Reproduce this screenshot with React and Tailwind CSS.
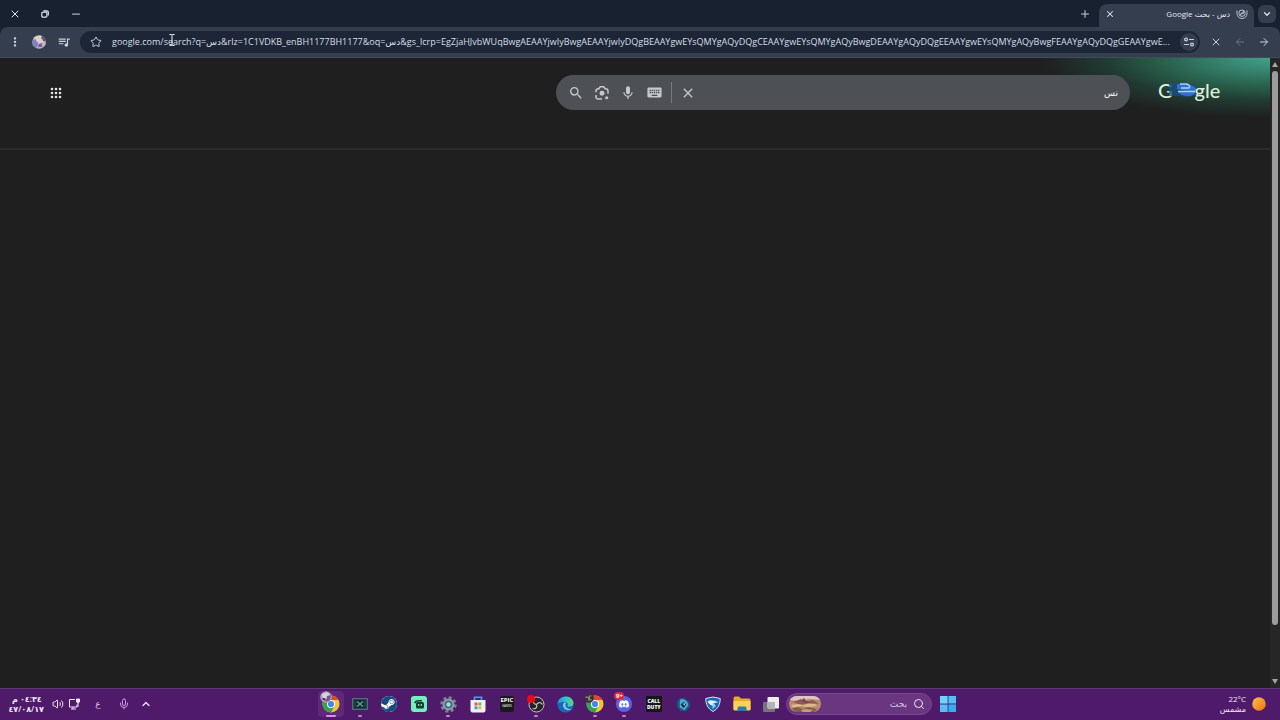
import {
  Search,
  X,
  Plus,
  Minus,
  Star,
  ChevronDown,
  ChevronUp,
  ArrowLeft,
  ArrowRight,
  Mic,
  Volume2,
} from "lucide-react";
import {
  MdMoreVert,
  MdQueueMusic,
  MdMic,
  MdKeyboard,
  MdSearch,
  MdClose,
} from "react-icons/md";
import { SiDiscord, SiSteam } from "react-icons/si";

const PAGE_URL =
  "google.com/search?q=دس&rlz=1C1VDKB_enBH1177BH1177&oq=دس&gs_lcrp=EgZjaHJvbWUqBwgAEAAYjwIyBwgAEAAYjwIyDQgBEAAYgwEYsQMYgAQyDQgCEAAYgwEYsQMYgAQyBwgDEAAYgAQyDQgEEAAYgwEYsQMYgAQyBwgFEAAYgAQyDQgGEAAYgwE...";

/* ---------- icons ---------- */

function RestoreIcon() {
  return (
    <svg viewBox="0 0 10 10" className="h-2 w-2" fill="none" stroke="currentColor" strokeWidth="1.5">
      <rect x="1" y="2.6" width="6.4" height="6.4" rx="1.4" />
      <path d="M3 1h4.4A1.7 1.7 0 0 1 9.1 2.7V7" />
    </svg>
  );
}

function TuneIcon() {
  return (
    <svg viewBox="0 0 12 12" className="h-3 w-3" fill="none" stroke="currentColor" strokeWidth="1.2">
      <circle cx="3" cy="3.5" r="1.4" />
      <path d="M6 3.5h5M1 8.5h5" />
      <circle cx="9" cy="8.5" r="1.4" />
    </svg>
  );
}

function TabIcon() {
  return (
    <svg viewBox="0 0 12 12" className="h-3 w-3" fill="none" stroke="#b9c1cd">
      <path d="M1 2.5v3a5 5 0 0 0 10 0v-3" strokeWidth="1" />
      <circle cx="6" cy="5.2" r="3.2" strokeWidth="1" />
      <path d="M4 7 8 3.4M6 5.2h2" strokeWidth="1.1" />
    </svg>
  );
}

function AppsIcon() {
  return (
    <svg viewBox="0 0 12 12" className="h-3 w-3" fill="currentColor">
      {[2, 6, 10].map((y) => [2, 6, 10].map((x) => <circle key={`${x}-${y}`} cx={x} cy={y} r="1.3" />))}
    </svg>
  );
}

function LensIcon() {
  return (
    <svg viewBox="0 0 24 24" className="h-4 w-4" fill="none" stroke="currentColor" strokeWidth="2.2">
      <path d="M3 11V9a3.500 3.500 0 0 1 3.500-3.500H8M16 5.500h1.500A3.500 3.500 0 0 1 21 9v4M3 15v2.500A3.500 3.500 0 0 0 6.500 21H12" />
      <path d="M7 5.500 9.500 2.500h5L17 5.500" />
      <circle cx="12" cy="12.500" r="3.700" fill="currentColor" stroke="none" />
      <circle cx="19" cy="19" r="2.300" fill="currentColor" stroke="none" />
    </svg>
  );
}

function TextCursor() {
  return (
    <svg viewBox="0 0 6 12" className="pointer-events-none absolute top-0 left-[57px] h-3 w-1.5" fill="none" stroke="#f2f2f2">
      <path d="M.5.500h2l.5.500.500-.500h2M3 1v10M.5 11.500h2l.500-.500.500.500h2" />
    </svg>
  );
}

function ProfileIcon() {
  return (
    <svg viewBox="0 0 14 14" className="h-3.5 w-3.5">
      <defs>
        <clipPath id="profile">
          <circle cx="7" cy="7" r="6.8" />
        </clipPath>
      </defs>
      <g clipPath="url(#profile)">
        <rect width="14" height="14" fill="#b6b0c6" />
        <path d="M0 6 5 3l2 5-3 6H0z" fill="#8080c0" />
        <path d="M2 2 9 0l1 4-5 3z" fill="#e2d2bd" />
        <path d="M9 2 14 0v6l-3 0z" fill="#5d5668" />
        <path d="m5 6 5-2 2 4-4 3z" fill="#d9cbd8" />
        <path d="m7 9 3-1 0 4H6z" fill="#76609a" />
        <path d="m10 7 4 0v5l-3-1z" fill="#c9b4b4" />
      </g>
    </svg>
  );
}

function ChromeIcon() {
  return (
    <svg viewBox="0 0 18 18" className="h-[18px] w-[18px]">
      <circle cx="9" cy="9" r="8.5" fill="#f4c531" />
      <path d="M9 9 1.640 4.750A8.500 8.500 0 0 0 9 17.500L12.500 11z" fill="#31a554" />
      <path d="M1.640 4.750A8.500 8.500 0 0 1 16.360 4.750L9 5.200 5.700 11z" fill="#e34335" />
      <circle cx="9" cy="9" r="4" fill="#fff" />
      <circle cx="9" cy="9" r="3.100" fill="#4285f4" />
    </svg>
  );
}

function ChromeProfileIcon() {
  return (
    <div className="relative">
      <ChromeIcon />
      <svg viewBox="0 0 12 12" className="absolute -top-1 -left-0.5 h-3 w-3">
        <circle cx="6" cy="6" r="5.800" fill="#a9a0bd" />
        <path d="M2 3 7 1l3 3-3 3-4 3z" fill="#ded0da" />
        <path d="m7 5 4-1-1 5-4 2z" fill="#675c8a" />
        <path d="M2 7h3l1 3-3-1z" fill="#44405c" />
      </svg>
    </div>
  );
}

function ChromeGameIcon() {
  return (
    <div className="relative">
      <ChromeIcon />
      <svg viewBox="0 0 10 10" className="absolute -top-0.5 -left-0.5 h-2.5 w-2.5">
        <circle cx="5" cy="5" r="4.800" fill="#34333a" />
        <path d="M1.500 3.500h2.500v1.500H1.500zM5 2.500h2.500v1H6v2.500h1.500v1.500H4V5z" fill="#8a857c" />
      </svg>
    </div>
  );
}

function TerminalIcon() {
  return (
    <svg viewBox="0 0 16 12" className="h-3 w-4">
      <rect x=".7" y=".7" width="14.600" height="10.600" fill="#132c35" stroke="#58757c" strokeWidth="1.200" />
      <path d="m5 3.500 6 5M11 3.500l-6 5" stroke="#54a985" strokeWidth="1.300" />
      <path d="M3 3v6M13 3v6" stroke="#315561" strokeWidth=".8" />
    </svg>
  );
}

function SteamIcon() {
  return (
    <div className="flex h-4 w-4 items-center justify-center rounded-full bg-white">
      <SiSteam className="h-4 w-4 text-[#164a80]" />
    </div>
  );
}

function GreenAppIcon() {
  return (
    <svg viewBox="0 0 16 16" className="h-4 w-4">
      <rect width="16" height="16" rx="3" fill="#73efbd" />
      <path d="M3 6.500Q4 4 7 4h4v1.500H7Q5.500 5.500 4.500 7.500z" fill="#183d37" />
      <rect x="5" y="6" width="8" height="6.500" rx="1.500" fill="#183d37" />
      <path d="M7.700 8v2M10.300 8v2" stroke="#73efbd" strokeWidth="1.200" />
    </svg>
  );
}

function SettingsIcon() {
  return (
    <svg viewBox="0 0 18 18" className="h-[17px] w-[17px]">
      <circle cx="9" cy="9" r="7" fill="none" stroke="#78858e" strokeWidth="3.400" strokeDasharray="3.100 2.400" />
      <circle cx="9" cy="9" r="6.300" fill="#8b989f" />
      <circle cx="9" cy="9" r="4" fill="#386a86" />
      <circle cx="9" cy="9" r="2.300" fill="#a9d6e0" />
    </svg>
  );
}

function StoreIcon() {
  return (
    <svg viewBox="0 0 16 17" className="h-[17px] w-4">
      <path d="M4.500 4V1.200h7V4" fill="none" stroke="#43a4e8" strokeWidth="1.600" />
      <path d="M.5 4h15v10.500a2 2 0 0 1-2 2h-11a2 2 0 0 1-2-2z" fill="#eef1fa" />
      <path fill="#e45b42" d="M4.500 6.500h3v3h-3z" />
      <path fill="#7bb548" d="M8.300 6.500h3v3h-3z" />
      <path fill="#3f9ddd" d="M4.500 10.300h3v3h-3z" />
      <path fill="#edb83d" d="M8.300 10.300h3v3h-3z" />
    </svg>
  );
}

function EpicIcon() {
  return (
    <div className="flex h-4 w-3.5 flex-col items-center rounded-xs bg-[#191919] pt-px text-white">
      <span className="text-[6px] leading-[7px] font-bold">EPIC</span>
      <span className="text-[3px] leading-[4px]">GAMES</span>
    </div>
  );
}

function ObsIcon() {
  return (
    <svg viewBox="0 0 18 18" className="h-[18px] w-[18px]">
      <circle cx="9.500" cy="9.500" r="7.500" fill="#252328" stroke="#c8c3c8" strokeWidth="1" />
      <path d="M9.500 9.500C6 9 5.500 6 7.500 4M9.500 9.500c2-3 5-2 6 0M9.500 9.500c1 3-1 5-4 4" fill="none" stroke="#bab6bb" strokeWidth="1.300" />
      <circle cx="4" cy="4" r="3.900" fill="#ef0814" />
    </svg>
  );
}

function EdgeIcon() {
  return (
    <svg viewBox="0 0 18 18" className="h-[17px] w-[17px]">
      <defs>
        <linearGradient id="edge" x1="0" x2="1">
          <stop stopColor="#278fd5" />
          <stop offset=".5" stopColor="#2ec4d6" />
          <stop offset="1" stopColor="#62d36c" />
        </linearGradient>
      </defs>
      <circle cx="9" cy="9" r="8.500" fill="#1469b8" />
      <path d="M.6 8.500C1 3.500 4.500.5 9.500.5c5 0 8 3.700 8 7 0 3-3 4.500-6.500 3.500 1.200-2.500 0-5-3.500-5C4 6 1.500 7.500.6 8.500z" fill="url(#edge)" />
      <path d="M7.500 7c-3 3 0 8 4 8 2 0 3.500-.5 4.500-1.500-3 .8-7-.6-7-3.500 0-1.200.5-1.800 1-2.200-.6-.8-1.600-1.200-2.500-.8z" fill="#bde9f5" opacity=".7" />
    </svg>
  );
}

function DiscordIcon() {
  return (
    <div className="relative flex h-4 w-4 items-center justify-center rounded-full bg-[#5865e8]">
      <SiDiscord className="h-2.5 w-2.5 text-white" />
      <span className="absolute -top-1 -left-0.5 flex h-2 w-2.5 items-center justify-center rounded-full bg-[#d92b3e] text-[6px] font-bold text-white">
        9+
      </span>
    </div>
  );
}

function CodIcon() {
  return (
    <div className="flex h-4 w-4 flex-col items-center justify-center bg-[#151719] text-[5px] leading-[6px] font-extrabold text-white">
      <span>CALL</span>
      <span>DUTY</span>
    </div>
  );
}

function BlueFaceIcon() {
  return (
    <svg viewBox="0 0 16 16" className="h-[15px] w-[15px]">
      <path d="M4 1h5l5 4 1 5-4 5H5L1 10V5z" fill="#135b82" />
      <path d="M5 2c5 0 8 3 8 7l-4 5-5-3 0-6z" fill="#4aafd6" />
      <path d="M8 5 5 8l3 4 3-4z" fill="#0b2d4b" />
      <path d="m7 7 3 0-1 2z" fill="#c9edf7" />
    </svg>
  );
}

function ShieldIcon() {
  return (
    <svg viewBox="0 0 16 16" className="h-4 w-4">
      <path d="M.8 2.500Q8-.500 15.200 2.500c0 6-2 10-7.200 13-5.200-3-7.200-7-7.200-13z" fill="#1768b5" stroke="#d3e9f8" strokeWidth="1" />
      <path d="M3 4.500h7l4 2-5 .5 2 3.500-4 2.500 1-4z" fill="#8dc5ec" />
      <path d="M2.500 6c2-2 6-2 9 1l-4 0 1 3-3-1z" fill="#e5f4fc" />
    </svg>
  );
}

function FolderIcon() {
  return (
    <svg viewBox="0 0 18 16" className="h-4 w-[18px]">
      <path d="M.5 2q0-1.500 1.500-1.500h4l2 2h8q1.500 0 1.500 1.500v10H.5z" fill="#e8a924" />
      <path d="M.5 5h17v8q0 1.500-1.500 1.500H2Q.5 14.500.5 13z" fill="#fbd15b" />
      <path d="M4.500 15v-3q0-1.500 1.500-1.500h6q1.500 0 1.500 1.500v3z" fill="#247fae" />
    </svg>
  );
}

function TaskViewIcon() {
  return (
    <svg viewBox="0 0 16 15" className="h-[15px] w-4">
      <rect y="5" width="12" height="10" rx="1" fill="#77737a" />
      <rect x="4.500" width="11.500" height="11.500" rx="1" fill="#ededed" />
      <path d="M4.500 5H12v6.500H5.500l-1-1z" fill="#b5b1b7" />
    </svg>
  );
}

function WindowsIcon() {
  return (
    <svg viewBox="0 0 16 16" className="h-4 w-4">
      <path fill="#6ed2fa" d="M0 0h7.600v7.600H0z" />
      <path fill="#53c1f5" d="M8.400 0H16v7.600H8.400zM0 8.400h7.600V16H0z" />
      <path fill="#35aeed" d="M8.400 8.400H16V16H8.400z" />
    </svg>
  );
}

function SearchArtIcon() {
  return (
    <svg viewBox="0 0 32 16" className="h-4 w-8">
      <defs>
        <clipPath id="art">
          <rect width="32" height="16" rx="8" />
        </clipPath>
      </defs>
      <g clipPath="url(#art)">
        <rect width="32" height="16" fill="#b98a70" />
        <path d="M0 0h32v4L20 3 9 5 0 4z" fill="#e0c3c4" />
        <path d="m4 6 8-3 5 3 7-2 6 4-10-1-8 2z" fill="#8f5c4f" />
        <path d="m2 9 7-1 5 1 5-1 7 0 2 2-9 1-6-1-9 2z" fill="#e2b98e" />
        <path d="m3 12 6-1 5 2 5-2 9 2-3 3H6z" fill="#83604c" />
        <path d="m12 14 5-1 7 1-3 2h-7z" fill="#c79c78" />
        <path d="m12 5 3-3 2 3 5 1-5 1z" fill="#704460" />
      </g>
    </svg>
  );
}

function NetworkIcon() {
  return (
    <svg viewBox="0 0 12 12" className="h-3 w-3" fill="none" stroke="currentColor" strokeWidth="1">
      <path d="M7 1.500H1.500v7.500h7.500V6.500M3 11h5M5 9v2" />
      <path d="M8.500 1h3v3l-1.500 1-1.500-1zM10 5v4" fill="currentColor" />
    </svg>
  );
}

/* ---------- taskbar data ---------- */

const apps = [
  { name: "Chrome", icon: ChromeProfileIcon, active: true, running: true },
  { name: "Terminal", icon: TerminalIcon, running: true },
  { name: "Steam", icon: SteamIcon },
  { name: "Clips", icon: GreenAppIcon },
  { name: "Settings", icon: SettingsIcon, running: true },
  { name: "Store", icon: StoreIcon },
  { name: "Epic Games", icon: EpicIcon },
  { name: "OBS", icon: ObsIcon, running: true },
  { name: "Edge", icon: EdgeIcon },
  { name: "Chrome games", icon: ChromeGameIcon, running: true },
  { name: "Discord", icon: DiscordIcon, running: true },
  { name: "Call of Duty", icon: CodIcon },
  { name: "Launcher", icon: BlueFaceIcon },
  { name: "Rocket League", icon: ShieldIcon },
  { name: "Files", icon: FolderIcon },
  { name: "Task view", icon: TaskViewIcon },
];

/* ---------- browser ---------- */

function TabStrip() {
  return (
    <div className="flex h-[27px] items-end justify-between bg-[#172130]">
      <div className="flex h-full items-center text-[#e3e6ea]">
        <button aria-label="Close window" className="flex w-[30px] justify-center">
          <X className="h-3 w-3" strokeWidth={2} />
        </button>
        <button aria-label="Restore window" className="flex w-[30px] justify-center">
          <RestoreIcon />
        </button>
        <button aria-label="Minimize window" className="flex w-8 justify-center text-[#a5adb8]">
          <Minus className="h-3 w-3" strokeWidth={2.5} />
        </button>
      </div>
      <div className="flex h-full items-end">
        <button aria-label="New tab" className="flex h-full w-7 items-center justify-center text-[#c7ced8]">
          <Plus className="h-3 w-3" strokeWidth={2} />
        </button>
        <div className="flex h-[23px] w-[155px] items-center rounded-t-lg bg-[#343e4f] pr-1.5 pb-1 pl-1.5">
          <button aria-label="Close tab" className="text-[#e3e6ea]">
            <X className="h-2.5 w-2.5" strokeWidth={2.5} />
          </button>
          <span dir="rtl" className="mr-1.5 ml-auto text-[8px] whitespace-nowrap text-[#e5e8ec]">
            دس - بحث Google
          </span>
          <TabIcon />
        </div>
        <button
          aria-label="Search tabs"
          className="mr-1 mb-1 ml-1 flex h-[18px] w-[18px] items-center justify-center rounded-md bg-[#343e4f] text-[#dce0e6]"
        >
          <ChevronDown className="h-2.5 w-2.5" strokeWidth={3} />
        </button>
      </div>
    </div>
  );
}

function Toolbar() {
  return (
    <div className="bg-[#172130]">
      <div className="flex h-[31px] items-center rounded-t-lg border-b border-[#414b5a] bg-[#343e4f] text-[#c9d0da]">
        <button aria-label="Menu" className="flex w-[30px] justify-center">
          <MdMoreVert className="h-3.5 w-3.5" />
        </button>
        <button aria-label="Profile" className="flex w-[18px] justify-center">
          <ProfileIcon />
        </button>
        <button aria-label="Media controls" className="flex w-8 justify-center">
          <MdQueueMusic className="h-3.5 w-3.5" />
        </button>
        <div className="flex h-[22px] min-w-0 flex-1 items-center rounded-full bg-[#1c2636] pr-0.5 pl-2.5">
          <button aria-label="Bookmark" className="flex shrink-0">
            <Star className="h-3 w-3" strokeWidth={2} />
          </button>
          <div className="relative ml-2.5 flex min-w-0 flex-1 items-center">
            <input
              aria-label="Address"
              defaultValue={PAGE_URL}
              className="w-full bg-transparent text-[9px] leading-4 text-[#d8dde5] outline-none"
            />
            <TextCursor />
          </div>
          <button
            aria-label="Site information"
            className="flex h-[18px] w-[18px] shrink-0 items-center justify-center rounded-full bg-[#343e4f]"
          >
            <TuneIcon />
          </button>
        </div>
        <div className="flex items-center pl-1">
          <button aria-label="Stop" className="flex w-6 justify-center">
            <X className="h-3 w-3" strokeWidth={2} />
          </button>
          <button aria-label="Forward" className="flex w-6 justify-center text-[#697384]">
            <ArrowLeft className="h-3 w-3" strokeWidth={2} />
          </button>
          <button aria-label="Back" className="mr-1 flex w-6 justify-center">
            <ArrowRight className="h-3 w-3" strokeWidth={2} />
          </button>
        </div>
      </div>
    </div>
  );
}

function SearchHeader() {
  return (
    <header className="flex h-[92px] items-start border-b-2 border-[#2b2b2b] bg-[radial-gradient(ellipse_230px_60px_at_top_right,#43a18c_0%,#357f6a_25%,#275c48_50%,#213a31_72%,transparent_100%)] pt-[17px] pr-12 pl-[50px]">
      <button aria-label="Google apps" className="flex h-[35px] w-3 items-center justify-center text-[#e3e3e3]">
        <AppsIcon />
      </button>
      <div className="ml-auto flex h-[35px] w-[574px] items-center rounded-full bg-[#4d5156] pr-3 pl-3 text-[#c6c8cb]">
        <button aria-label="Search" className="flex">
          <MdSearch className="h-4 w-4" />
        </button>
        <button aria-label="Search by image" className="ml-2.5 flex">
          <LensIcon />
        </button>
        <button aria-label="Search by voice" className="ml-2.5 flex">
          <MdMic className="h-4 w-4" />
        </button>
        <button aria-label="On-screen keyboard" className="ml-2.5 flex">
          <MdKeyboard className="h-[17px] w-[17px]" />
        </button>
        <div className="ml-2 h-[21px] w-px bg-[#777b80]" />
        <button aria-label="Clear" className="ml-2 flex">
          <MdClose className="h-4 w-4" />
        </button>
        <input
          aria-label="Search query"
          dir="rtl"
          defaultValue="نس"
          className="min-w-0 flex-1 bg-transparent text-[9px] text-white outline-none"
        />
      </div>
      <a
        href="#"
        aria-label="Google"
        className="ml-7 flex h-[29px] w-16 items-center font-['Lato','Open_Sans',sans-serif] text-xl leading-none font-medium text-[#dcefdc]"
      >
        <span>G</span>
        <svg viewBox="2 0 30 16" className="-mx-1 h-4 w-[30px] shrink-0">
          <path d="M2 1h18q9 1 10 7-1 7-9 7-5 0-8-1H2z" fill="#174f80" opacity=".75" />
          <path d="M10 2h10q7 1 10 6-2 6-9 6-7 0-10-4h13L10 7z" fill="#346ed3" />
          <path d="M13 2h7q4 2 2 4h-8M11 9.500h17" fill="none" stroke="#a5d5ef" strokeWidth="1.500" />
        </svg>
        <span>gle</span>
      </a>
    </header>
  );
}

function ScrollBar() {
  return (
    <div aria-hidden="true" className="flex w-2.5 flex-col items-center bg-[#262626] py-1">
      <svg viewBox="0 0 6 5" className="h-[5px] w-1.5">
        <path d="M3 0 6 5H0z" fill="#a5a5a5" />
      </svg>
      <div className="mt-1 w-1.5 flex-[556] rounded-full bg-[#9c9c9c]" />
      <div className="flex-[54]" />
      <svg viewBox="0 0 6 5" className="h-[5px] w-1.5">
        <path d="M0 0h6L3 5z" fill="#a5a5a5" />
      </svg>
    </div>
  );
}

/* ---------- taskbar ---------- */

function Taskbar() {
  return (
    <footer className="grid h-8 grid-cols-[1fr_auto_1fr] items-center bg-[#501a6b] text-[#f0e6f5] shadow-[inset_0_1px_#5d3a75]">
      <div className="flex items-center pl-3">
        <time dir="rtl" className="w-8 text-right text-[8px] leading-[10px] font-semibold">
          <span className="block text-left">٠٤:٣٤ م</span>
          <span className="block text-left">٤٧/٠٨/١٧</span>
        </time>
        <button aria-label="Volume" className="ml-2 flex">
          <Volume2 className="h-3 w-3" strokeWidth={2} />
        </button>
        <button aria-label="Network" className="ml-1 flex">
          <NetworkIcon />
        </button>
        <button className="ml-3 w-3 text-[9px] text-[#d9bfe6]">ع</button>
        <button aria-label="Microphone" className="ml-3.5 flex text-[#c79bd9]">
          <Mic className="h-3 w-3" strokeWidth={2} />
        </button>
        <button aria-label="Hidden icons" className="ml-2.5 flex">
          <ChevronUp className="h-3 w-3" strokeWidth={2.5} />
        </button>
      </div>

      <div className="flex items-center">
        <div className="grid w-[470px] grid-cols-16">
          {apps.map(({ name, icon: Icon, active, running }) => (
            <div key={name} className="flex justify-center">
              <button
                aria-label={name}
                className={`relative flex h-[26px] w-[26px] items-center justify-center rounded-sm ${active ? "bg-[#5f2879]" : ""}`}
              >
                <Icon />
                {running && (
                  <span
                    className={`absolute bottom-0 h-0.5 rounded-full ${active ? "w-2.5 bg-[#dc8ff0]" : "w-1 bg-[#b28abf]"}`}
                  />
                )}
              </button>
            </div>
          ))}
        </div>
        <button className="flex h-[22px] w-[146px] items-center rounded-full border border-[#76458e] bg-[#6a367f] pr-1.5 pl-0.5">
          <SearchArtIcon />
          <span className="mr-1.5 ml-auto text-[9px] text-[#d9c6e2]">بحث</span>
          <Search className="h-3 w-3" strokeWidth={2} />
        </button>
        <button aria-label="Start" className="flex w-8 justify-center">
          <WindowsIcon />
        </button>
      </div>

      <button className="ml-auto flex items-center pr-3.5">
        <span dir="rtl" className="mr-1.5 text-[8px] leading-[10px]">
          <span dir="ltr" className="block text-right">22°C</span>
          <span className="block text-right">مشمس</span>
        </span>
        <svg viewBox="0 0 14 14" className="h-3.5 w-3.5">
          <defs>
            <linearGradient id="sun" x1="0" y1="0" x2="1" y2="1">
              <stop stopColor="#ffc34a" />
              <stop offset="1" stopColor="#ef6d12" />
            </linearGradient>
          </defs>
          <circle cx="7" cy="7" r="6.800" fill="url(#sun)" />
        </svg>
      </button>
    </footer>
  );
}

export default function App() {
  return (
    <div className="flex min-h-screen flex-col bg-[#1f1f1f] font-['Open_Sans','DejaVu_Sans',sans-serif]">
      <TabStrip />
      <Toolbar />
      <div className="flex flex-1">
        <main className="min-w-0 flex-1">
          <SearchHeader />
        </main>
        <ScrollBar />
      </div>
      <Taskbar />
    </div>
  );
}
